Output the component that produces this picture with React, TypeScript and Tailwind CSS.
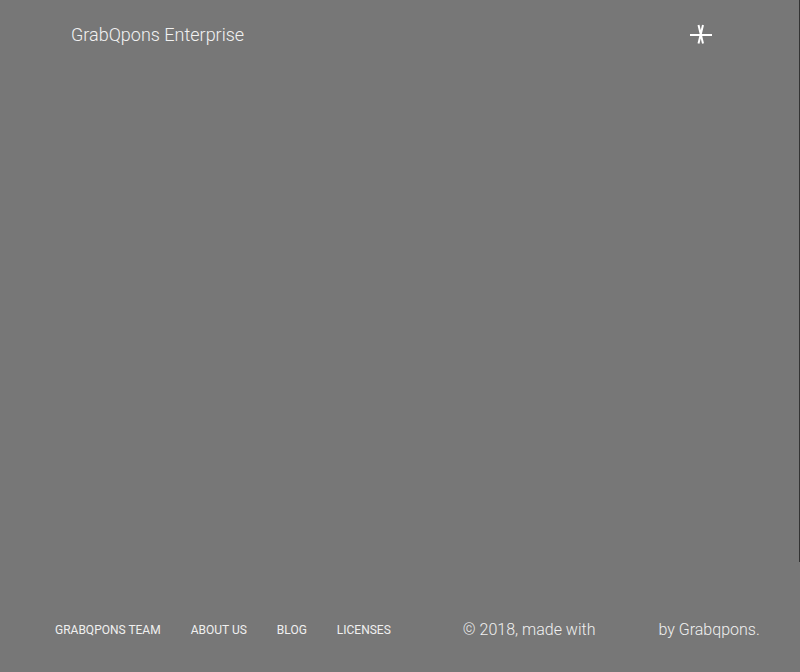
export default function App() {
  return (
    <div
      className="relative w-[800px] h-[672px] bg-[#777777] text-white flex flex-col overflow-hidden"
      style={{ fontFamily: 'Roboto, "Liberation Sans", sans-serif' }}
    >
      {/* 헤더 */}
      <div className="flex items-center justify-between pl-[71px] pr-[87px] pt-[23px]">
        <span className="text-[18px] font-light leading-[24px] text-[#f2f2f2]">GrabQpons Enterprise</span>
        <svg width="24" height="24" viewBox="0 0 24 24" className="shrink-0 block">
          <path d="M1 12H23M9.5 2L14 20.5M14 2L9.5 20.5" stroke="#ffffff" strokeWidth="2" fill="none" />
        </svg>
      </div>

      <div className="flex-1" />

      {/* 푸터 */}
      <div className="flex items-center pl-[55px] pb-[30px] text-[#f0f0f0]">
        <div className="flex gap-[30px] text-[12px] uppercase">
          <span>GrabQpons Team</span>
          <span>About us</span>
          <span>Blog</span>
          <span>Licenses</span>
        </div>
        <div className="ml-[72px] flex text-[16px] font-light">
          <span>© 2018, made with</span>
          <span className="w-[63px]" />
          <span>by Grabqpons.</span>
        </div>
      </div>

      <div className="absolute right-0 top-0 w-px h-[562px] bg-[#333333]" />
    </div>
  )
}
